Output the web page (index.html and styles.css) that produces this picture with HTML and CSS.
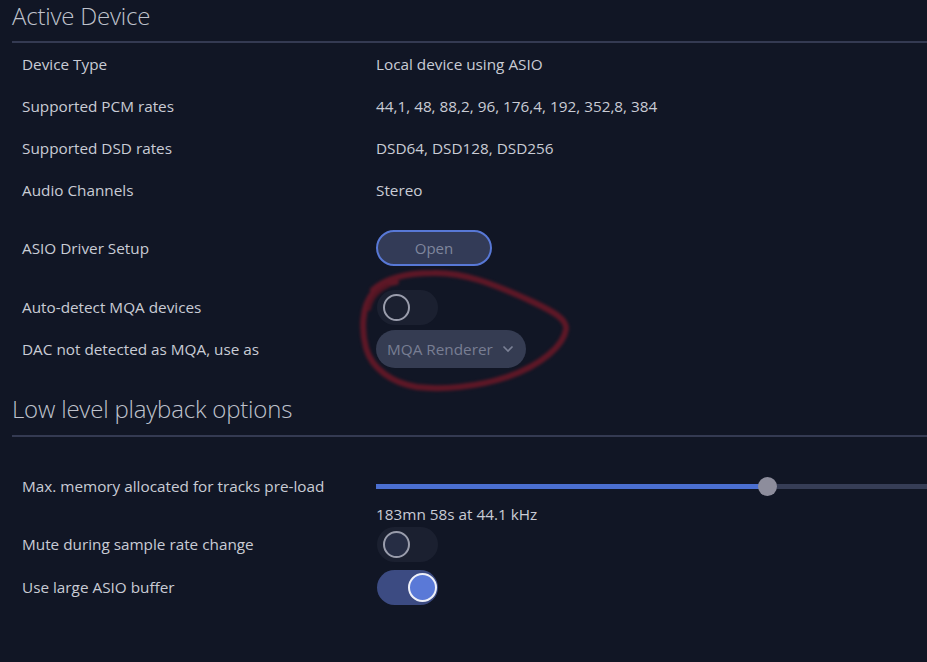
FILE: index.html
```html
<!DOCTYPE html>
<html lang="en">

<head>
    <meta charset="UTF-8">
    <meta name="viewport" content="width=device-width, initial-scale=1.0">
    <title>Audio Settings</title>
    <link rel="stylesheet" href="styles.css">
</head>

<body>
    <div id="page">

        <h2 class="section-title first">Active Device</h2>

        <div class="row">
            <span class="label">Device Type</span>
            <span class="value">Local device using ASIO</span>
        </div>
        <div class="row">
            <span class="label">Supported PCM rates</span>
            <span class="value">44,1, 48, 88,2, 96, 176,4, 192, 352,8, 384</span>
        </div>
        <div class="row">
            <span class="label">Supported DSD rates</span>
            <span class="value">DSD64, DSD128, DSD256</span>
        </div>
        <div class="row">
            <span class="label">Audio Channels</span>
            <span class="value">Stereo</span>
        </div>
        <div class="row tall">
            <span class="label">ASIO Driver Setup</span>
            <div class="value"><button class="btn-open">Open</button></div>
        </div>

        <div id="mqa-block">
            <div class="row mid">
                <span class="label">Auto-detect MQA devices</span>
                <div class="value"><div class="toggle"><span class="knob"></span></div></div>
            </div>
            <div class="row short">
                <span class="label">DAC not detected as MQA, use as</span>
                <div class="value">
                    <div class="select">MQA Renderer
                        <svg width="12" height="8" viewBox="0 0 12 8"><path d="M1.5 1.5 L6 6 L10.5 1.5" fill="none" stroke="#7b8196" stroke-width="1.6"/></svg>
                    </div>
                </div>
            </div>
            <!-- red scribble drawn over the screenshot -->
            <svg class="scribble" width="230" height="140" viewBox="0 0 230 140">
                <path d="M21 29 C35 16 60 12 81 12 C110 11 140 22 181 41 C200 50 215 58 214 68 C212 84 190 104 155 116 C125 126 90 129 65 126 C40 122 20 108 14 87 C9 68 10 45 21 32 C28 24 36 22 44 21"
                    fill="none" stroke="#6c1827" stroke-width="6" stroke-linecap="round" />
                <path d="M17 48 C19 37 25 30 36 25" fill="none" stroke="#5c1522" stroke-width="4" stroke-linecap="round" />
            </svg>
        </div>

        <h2 class="section-title second">Low level playback options</h2>

        <div class="row slider-row">
            <span class="label">Max. memory allocated for tracks pre-load</span>
            <div class="value">
                <div class="slider">
                    <div class="slider-fill" style="width: 391px"></div>
                    <span class="slider-thumb"></span>
                </div>
            </div>
        </div>
        <div class="row caption">
            <span class="label"></span>
            <span class="value">183mn 58s at 44.1 kHz</span>
        </div>
        <div class="row mute">
            <span class="label">Mute during sample rate change</span>
            <div class="value"><div class="toggle dark"><span class="knob"></span></div></div>
        </div>
        <div class="row large">
            <span class="label">Use large ASIO buffer</span>
            <div class="value"><div class="toggle on"><span class="knob"></span></div></div>
        </div>
        <div class="row cut">
            <span class="label">Enable the bit-perfect volume limiter</span>
        </div>

    </div>
</body>

</html>
```

FILE: styles.css
```css
* {
    padding: 0;
    margin: 0;
    box-sizing: border-box;
}

body {
    background-color: #111625;
    color: #c9ccd5;
    font-family: "Open Sans", "Noto Sans", sans-serif;
    font-size: 15.3px;
    overflow: hidden;
}

#page {
    padding-left: 12px;
    width: 927px;
}

.section-title {
    font-weight: 300;
    font-size: 24px;
    letter-spacing: -0.2px;
    line-height: 32px;
    color: #bfc2cc;
    border-bottom: 2px solid #343a52;
}

.section-title.first {
    height: 43px;
}

.section-title.second {
    margin-top: 24px;
    height: 44px;
}

.row {
    display: flex;
    align-items: center;
    height: 42px;
}

.row.tall {
    height: 74px;
}

.row.mid {
    height: 44px;
}

.row.short {
    height: 40px;
}

.label {
    width: 364px;
    padding-left: 10px;
    flex-shrink: 0;
}

.value {
    flex: 1;
    display: flex;
    align-items: center;
}

.btn-open {
    width: 116px;
    height: 36px;
    border-radius: 18px;
    border: 2px solid #5878d6;
    background-color: #333b57;
    color: #7f869d;
    font-family: "Open Sans", "Noto Sans", sans-serif;
    font-size: 15px;
}

.toggle {
    width: 61px;
    height: 35px;
    border-radius: 18px;
    background-color: #1b2030;
    display: flex;
    align-items: center;
    padding-left: 6px;
    margin-left: 1px;
}

.toggle .knob {
    width: 27px;
    height: 27px;
    border-radius: 50%;
    border: 2px solid #9a9dac;
    background-color: #1b2030;
}

.toggle.dark .knob {
    background-color: #262d44;
}

.toggle.on {
    background-color: #3c4b82;
    justify-content: flex-end;
    padding-left: 0;
    padding-right: 1px;
}

.toggle.on .knob {
    width: 29px;
    height: 29px;
    border-color: #eef0f8;
    background-color: #5a79d7;
}

.select {
    width: 150px;
    height: 38px;
    border-radius: 19px;
    background-color: #353c52;
    color: #787e93;
    display: flex;
    align-items: center;
    justify-content: space-between;
    padding: 0 12px 0 11px;
}

#mqa-block {
    position: relative;
}

.scribble {
    position: absolute;
    left: 340px;
    top: -24px;
    filter: blur(1.5px);
    opacity: 0.85;
    pointer-events: none;
}

.slider-row {
    margin-top: 28px;
}

.slider {
    position: relative;
    width: 100%;
    height: 5px;
    background-color: #363d56;
}

.slider-fill {
    height: 5px;
    background-color: #4b6fd1;
}

.slider-thumb {
    position: absolute;
    left: 382px;
    top: -7px;
    width: 19px;
    height: 19px;
    border-radius: 50%;
    background-color: #8d8d9c;
}

.row.caption {
    height: 14px;
}

.row.mute {
    height: 46px;
}

.row.large {
    height: 40px;
}

.row.cut {
    margin-top: 41px;
}
```
